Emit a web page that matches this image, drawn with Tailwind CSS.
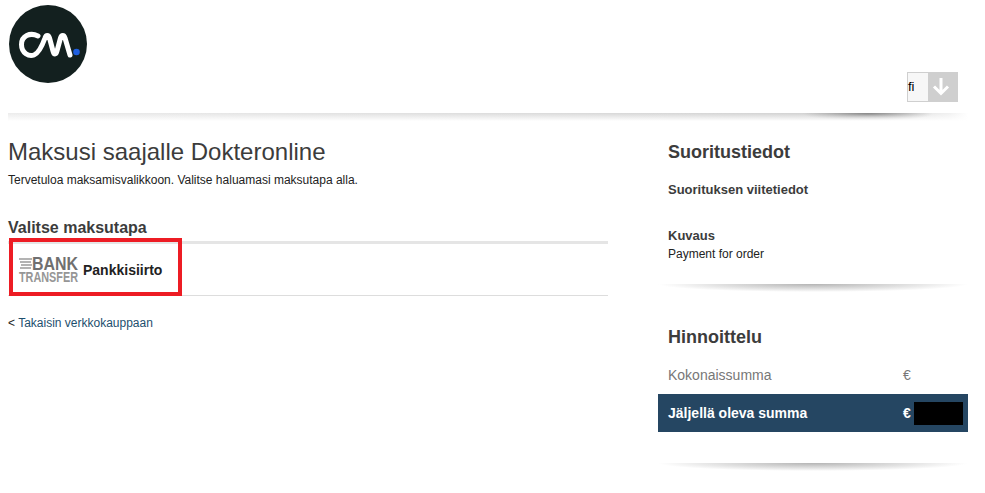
<!DOCTYPE html>
<html lang="en">
<head>
    <meta charset="UTF-8">
    <title>Maksusi saajalle Dokteronline</title>
    <script src="https://cdn.jsdelivr.net/npm/@tailwindcss/browser@4"></script>
</head>
<body class="bg-white font-['Liberation_Sans',Arial,sans-serif] text-[#3c3c3c]">
<div class="w-[985px] h-[493px] overflow-hidden px-2">
    <!-- header -->
    <div class="w-[960px] h-[113px] flex justify-between items-start">
        <svg class="mt-[5px] ml-px" width="78" height="78" viewBox="0 0 78 78">
            <circle cx="39" cy="39" r="39" fill="#13201f"/>
            <path d="M29 31 C21 27 12.500 31 12.500 39.500 C12.500 48 20 52 25 50 C29 48.500 32 44 36 33 C37 29.500 39.500 29.500 40.500 33 L44 46 C45 50 47 50 48 46 L51.500 33 C52.500 29.500 55 29.500 56 33 L61 50" fill="none" stroke="#fff" stroke-width="5" stroke-linecap="round" stroke-linejoin="round"/>
            <circle cx="67.500" cy="47" r="3.300" fill="#1f5fe0"/>
        </svg>
        <div class="mt-[72px] mr-[10px] flex h-[30px] w-[51px] bg-[#cfcfcf]">
            <div class="w-[20px] m-px mr-0 bg-[#f7f7f7] text-black text-[13px] leading-[28px]">fi</div>
            <svg class="ml-[3px] mt-[4px]" width="20" height="20" viewBox="0 0 20 20"><path d="M10 2 V17 M3 10.500 L10 17.500 L17 10.500" fill="none" stroke="#fff" stroke-width="3"/></svg>
        </div>
    </div>
    <div class="w-[960px] h-[8px] bg-[linear-gradient(to_bottom,transparent,#fff_100%),radial-gradient(ellipse_65px_7px_at_860px_1px,#808080,transparent),linear-gradient(to_right,#ececec,#d0d0d0_88%,#f0f0f0_98%,#fff)]"></div>

    <div class="flex mt-[11px]">
        <!-- left column -->
        <div class="w-[600px]">
            <h1 class="text-[24px] leading-[40px] font-normal">Maksusi saajalle Dokteronline</h1>
            <p class="text-[12px] leading-[14px] text-[#222] mt-px">Tervetuloa maksamisvalikkoon. Valitse haluamasi maksutapa alla.</p>
            <h2 class="text-[16px] leading-[20px] font-bold mt-[31px]">Valitse maksutapa</h2>
            <div class="relative h-[55px] mt-[3px] border-t-[3px] border-[#e5e5e5]">
                <div class="flex items-center h-[52px] pl-[11px] border-b border-[#ddd]">
                    <svg class="overflow-visible" width="60" height="26" viewBox="0 0 60 26">
                        <path d="M0 2 H13 M1 5 H12 M2 8 H13 M1 11 H12" stroke="#9a9a9a" stroke-width="1.500" fill="none"/>
                        <text x="13" y="13" font-family="Liberation Sans" font-weight="700" font-size="18" textLength="46" lengthAdjust="spacingAndGlyphs" fill="#707070">BANK</text>
                        <text x="0" y="25" font-family="Liberation Sans" font-weight="700" font-size="14" textLength="59" lengthAdjust="spacingAndGlyphs" fill="#969696">TRANSFER</text>
                    </svg>
                    <span class="ml-[4px] mt-[2px] text-[14px] font-bold text-[#222]">Pankkisiirto</span>
                </div>
                <!-- red highlight drawn on top of the screenshot -->
                <div class="absolute left-px top-[-6px] w-[173px] h-[58px] border-[4px] border-[#ed1c24]"></div>
            </div>
            <p class="mt-[20px] text-[12px] leading-[14px] text-[#1d4f6e]"><span class="text-[#222]">&lt;</span> Takaisin verkkokauppaan</p>
        </div>
        <!-- right column -->
        <div class="w-[310px] ml-[50px]">
            <div class="pl-[10px]">
                <h2 class="text-[18px] leading-[24px] font-bold mt-[8px]">Suoritustiedot</h2>
                <h3 class="text-[13px] leading-[16px] font-bold mt-[18px]">Suorituksen viitetiedot</h3>
                <h3 class="text-[13px] leading-[16px] font-bold mt-[30px]">Kuvaus</h3>
                <p class="text-[12px] leading-[14px] text-[#222] mt-[3px]">Payment for order</p>
            </div>
            <div class="h-[8px] mt-[23px] bg-[radial-gradient(ellipse_50%_100%_at_50%_0,#b4b4b4,#e0e0e0_60%,transparent)]"></div>
            <div class="pl-[10px]">
                <h2 class="text-[18px] leading-[24px] font-bold mt-[33px]">Hinnoittelu</h2>
            </div>
            <div class="flex justify-between items-center h-[24px] mt-[14px] pl-[10px] text-[14px] text-[#777]">
                <span>Kokonaissumma</span>
                <span class="w-[65px]">€</span>
            </div>
            <div class="flex justify-between items-center h-[38px] mt-[7px] pl-[10px] bg-[#254662] text-white text-[14px] font-bold">
                <span>Jäljellä oleva summa</span>
                <div class="flex items-center w-[65px] gap-[3px]"><span>€</span><span class="w-[49px] h-[23px] bg-black"></span></div>
            </div>
            <div class="h-[8px] mt-[31px] bg-[radial-gradient(ellipse_50%_100%_at_50%_0,#b4b4b4,#e0e0e0_60%,transparent)]"></div>
        </div>
    </div>
</div>
</body>
</html>
